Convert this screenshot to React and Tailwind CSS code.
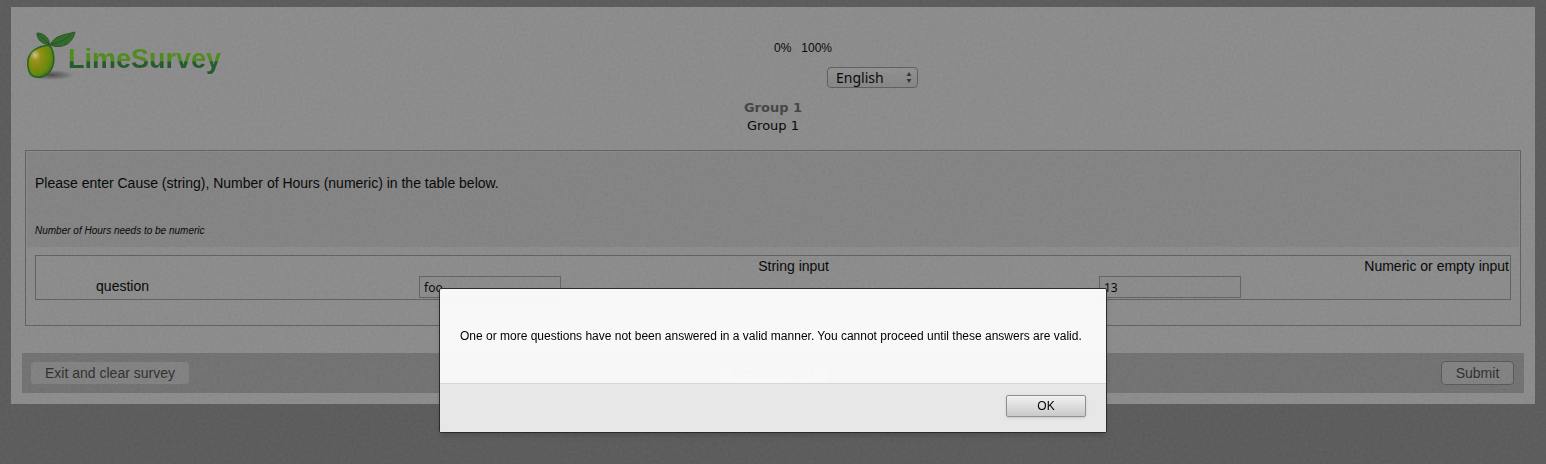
import { useState } from 'react'

const columns = [
  { id: 'string', label: 'String input' },
  { id: 'numeric', label: 'Numeric or empty input' },
]

function Logo(){
  return (
    <a href="#" className="flex w-[200px] items-start">
      <svg width="50" height="52" viewBox="0 0 50 52" className="-mr-2 shrink-0">
        <defs>
          <radialGradient id="lime" cx="0.3" cy="0.35" r="0.75">
            <stop offset="0" stopColor="#a79a2c"/>
            <stop offset="0.35" stopColor="#8c8d08"/>
            <stop offset="0.75" stopColor="#628607"/>
            <stop offset="1" stopColor="#3f7010"/>
          </radialGradient>
          <radialGradient id="shine"><stop offset="0" stopColor="#c9c184"/><stop offset="1" stopColor="#c9c184" stopOpacity="0"/></radialGradient>
          <radialGradient id="shade"><stop offset="0" stopColor="#484848"/><stop offset="1" stopColor="#484848" stopOpacity="0"/></radialGradient>
        </defs>
        <ellipse cx="25" cy="44" rx="24" ry="5" fill="url(#shade)"/>
        <path d="M23 14C14 15 4 19 2 29c-1 7 1 14 5 16 6 3 14 0 18-6 4-7 4-19-2-25Z" fill="url(#lime)" stroke="#1f5f16" strokeWidth="1.6"/>
        <circle cx="9" cy="24" r="5" fill="url(#shine)"/>
        <path d="M24 14C16 13 11 9 11 2c7 0 12 5 13 12Z" fill="#2c6826" stroke="#234f24"/>
        <path d="M24 14C29 4 38 4 49 1c-2 10-11 18-25 13Z" fill="#2c6826" stroke="#234f24"/>
        <path d="M12 3l11 10M26 13c7-1 13-4 19-9" fill="none" stroke="#1d4a1f" strokeWidth="0.9"/>
      </svg>
      <span className="mt-[13px] bg-linear-to-b from-[#4c8a18] from-55% to-[#1f5528] to-60% bg-clip-text text-[27px] leading-[30px] font-bold text-transparent">LimeSurvey</span>
    </a>
  )
}

function Grain(){
  return (
    <svg aria-hidden="true" className="pointer-events-none fixed inset-0 h-full w-full opacity-[0.06]">
      <filter id="grain">
        <feTurbulence type="fractalNoise" baseFrequency="0.35" numOctaves="2"/>
        <feColorMatrix values="0.8 0 0 0 0  0.8 0 0 0 0  0.8 0 0 0 0  0 0 0 0 1"/>
      </filter>
      <rect width="100%" height="100%" filter="url(#grain)"/>
    </svg>
  )
}

function AlertDialog({ onClose }){
  return (
    <div role="alertdialog" aria-describedby="alert-text" className="fixed top-[288px] left-1/2 w-[668px] max-w-full -translate-x-1/2 rounded-xs border border-[#2b2b2b] bg-[#fcfcfc]/97 text-xs leading-4 text-black shadow-md">
      <p id="alert-text" className="px-5 pt-[39px] pb-[39px]">One or more questions have not been answered in a valid manner. You cannot proceed until these answers are valid.</p>
      <div className="flex justify-end border-t border-[#d6d6d6] bg-[#e6e6e6]/90 px-5 pt-[11px] pb-[15px]">
        <button onClick={onClose} className="h-[22px] w-20 rounded-xs border border-[#8f8f8f] bg-linear-to-b from-[#f1f1f1] to-[#c9c9c9] text-center shadow-sm">OK</button>
      </div>
    </div>
  )
}

export default function App(){
  const [open, setOpen] = useState(true)
  const [lang, setLang] = useState('en')
  const [answers, setAnswers] = useState({ string: 'foo', numeric: '13' })

  const update = (id, value) => setAnswers({ ...answers, [id]: value })

  return (
    <div className="flow-root min-h-screen bg-[#595959] font-['Liberation_Sans',Arial,sans-serif] text-sm text-black">
      <div className="mx-[11px] mt-[7px] bg-[#8b8b8b] px-[11px] pb-[11px]">
        <header className="grid grid-cols-2 pt-6">
          <div className="pl-1"><Logo/></div>
          <div>
            <div className="mt-2 flex gap-[10px] pl-px text-xs leading-[18px]">
              <span>0%</span>
              <span>100%</span>
            </div>
            <div className="relative mt-[10px] ml-[54px] w-[91px]">
              <select aria-label="Language" value={lang} onChange={e=>setLang(e.target.value)} className="block h-[21px] w-full appearance-none rounded-sm border border-[#5c5c5c] bg-linear-to-b from-[#909090] to-[#848484] pl-2 font-['Noto_Sans',sans-serif] text-sm leading-[19px]">
                <option value="en">English</option>
              </select>
              <svg width="6" height="11" viewBox="0 0 6 11" className="pointer-events-none absolute top-[5px] right-[6px]" fill="#303030">
                <path d="M3 0l2.5 4h-5zM3 11l2.5-4h-5z"/>
              </svg>
            </div>
          </div>
        </header>

        <div className="mt-[11px] text-center font-['DejaVu_Sans',Verdana,sans-serif] text-[13px] leading-[18px]">
          <h1 className="font-bold text-[#404040]">Group 1</h1>
          <p>Group 1</p>
        </div>

        <section className="mx-[3px] mt-[15px] border border-[#5e5e5e] p-px pb-[25px]">
          <div className="bg-[#828282] px-2 pt-[21px] pb-2">
            <p className="leading-5">Please enter Cause (string), Number of Hours (numeric) in the table below.</p>
            <p className="mt-[30px] text-[10px] leading-4 italic">Number of Hours needs to be numeric</p>
          </div>
          <div className="mx-2 mt-2 border border-[#5e5e5e]">
            <table className="w-full table-fixed border-collapse">
              <thead>
                <tr className="text-right leading-5">
                  <td className="w-[114px]"></td>
                  {columns.map(c=> <th key={c.id} scope="col" className="pr-px text-right font-normal">{c.label}</th>)}
                </tr>
              </thead>
              <tbody>
                <tr className="align-top">
                  <th scope="row" className="pr-px text-right leading-5 font-normal">question</th>
                  {columns.map(c=> (
                    <td key={c.id} className="pb-px">
                      <input aria-label={c.label} value={answers[c.id]} onChange={e=>update(c.id, e.target.value)} className="mx-auto block h-[22px] w-[142px] border border-[#606060] bg-[#8a8a8a] px-1 font-['Noto_Sans',sans-serif] text-xs"/>
                    </td>
                  ))}
                </tr>
              </tbody>
            </table>
          </div>
        </section>

        <nav className="mt-[27px] grid grid-cols-3 items-center bg-[#707070] px-2 py-2 text-[#2a2a2a]">
          <button className="h-6 w-40 justify-self-start rounded-sm border border-[#707070] bg-[#808080]">Exit and clear survey</button>
          <button className="h-6 w-28 justify-self-center rounded-sm border border-[#707070] bg-[#808080]">Resume later</button>
          <button onClick={()=>setOpen(true)} className="mr-[2px] h-6 w-[73px] justify-self-end rounded-sm border border-[#565656] bg-[#808080]">Submit</button>
        </nav>
      </div>
      <Grain/>
      {open && <AlertDialog onClose={()=>setOpen(false)}/>}
    </div>
  )
}
